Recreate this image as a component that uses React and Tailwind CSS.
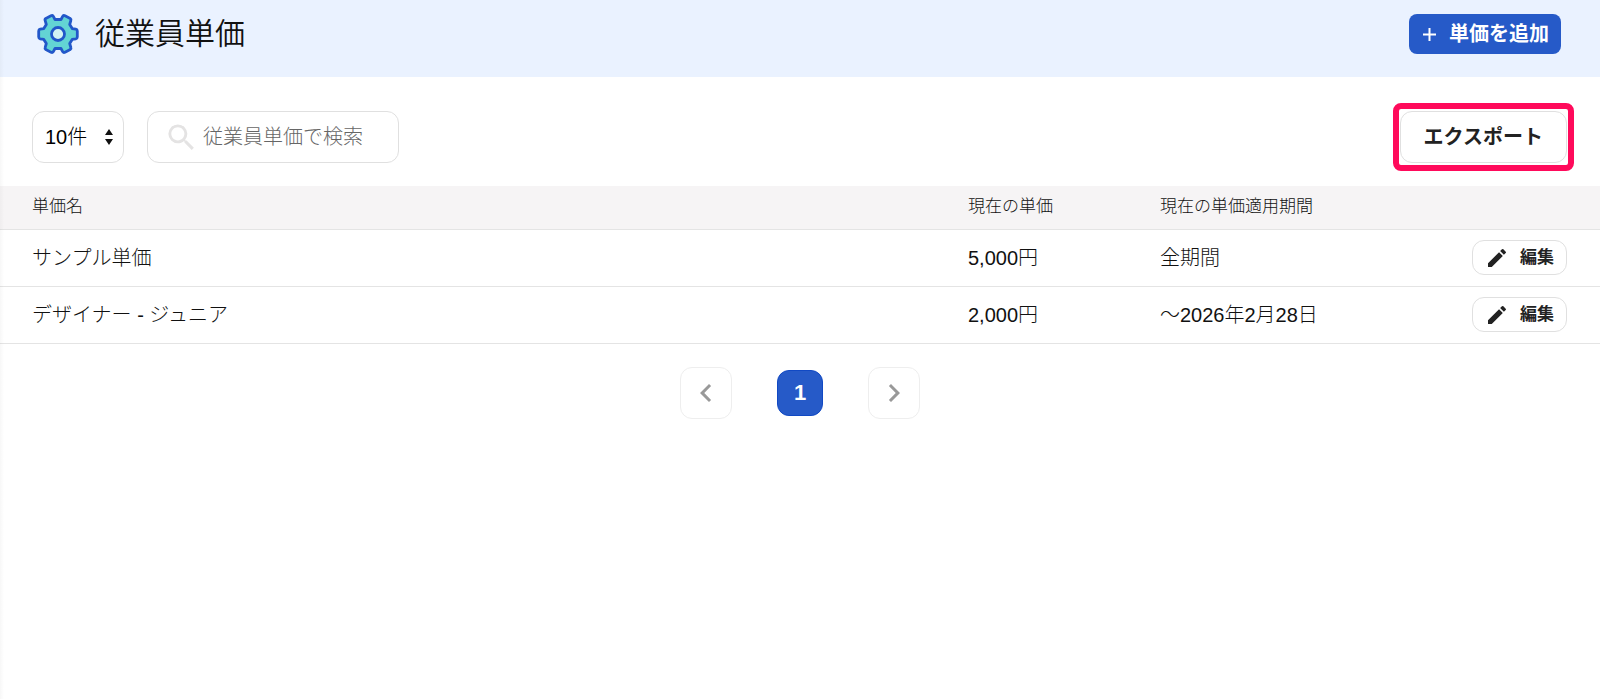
import React, { useState } from "react";
import { MdSearch, MdEdit, MdChevronLeft, MdChevronRight } from "react-icons/md";

const rates = [
  { id: 1, name: "サンプル単価", price: "5,000円", period: "全期間" },
  { id: 2, name: "デザイナー - ジュニア", price: "2,000円", period: "～2026年2月28日" },
];

function GearIcon() {
  return (
    <svg className="w-[42px] h-[42px]" viewBox="0 0 42 42" aria-hidden="true">
      <path
        d="M18 6.500H24L25.800 3.200Q26.600 2 28 2.700L33.200 5.400Q34.400 6.200 33.800 7.600L32.700 11.500L35.200 15.600L38.800 16.200Q40.300 16.500 40.300 18V24Q40.300 25.500 38.800 25.800L35.200 26.400L32.700 30.500L33.800 34.400Q34.400 35.800 33.200 36.600L28 39.300Q26.600 40 25.800 38.800L24 35.500H18L16.200 38.800Q15.400 40 14 39.300L8.800 36.600Q7.600 35.800 8.200 34.400L9.300 30.500L6.800 26.400L3.200 25.800Q1.700 25.500 1.700 24V18Q1.700 16.500 3.200 16.200L6.800 15.600L9.300 11.500L8.200 7.600Q7.600 6.200 8.800 5.400L14 2.700Q15.400 2 16.200 3.200Z"
        fill="#63d4d4"
        stroke="#2257c9"
        strokeWidth="2.8"
        strokeLinejoin="round"
      />
      <circle cx="21" cy="21" r="6.5" fill="#d3f3f3" stroke="#2257c9" strokeWidth="2.8" />
    </svg>
  );
}

function Header() {
  return (
    <header className="flex items-start justify-between h-[77px] bg-[#eaf2ff] pl-[37px] pr-[39px] pt-[13px]">
      <div className="flex items-center gap-4">
        <GearIcon />
        <h1 className="text-[30px] leading-10 font-[350] text-[#111]">従業員単価</h1>
      </div>
      <button
        type="button"
        className="flex items-center gap-3 h-10 mt-px pl-[13px] pr-3 rounded-lg bg-[#265ac8] text-white text-xl leading-6 font-bold"
      >
        <svg className="w-[15px] h-[15px]" viewBox="0 0 15 15" aria-hidden="true">
          <path d="M7.500 1v13M1 7.500h13" stroke="currentColor" strokeWidth="2" />
        </svg>
        単価を追加
      </button>
    </header>
  );
}

function Toolbar() {
  const [keyword, setKeyword] = useState("");

  return (
    <div className="flex items-center justify-between pl-8 pr-[33px] pt-[34px] pb-[23px]">
      <div className="flex items-center gap-[23px]">
        <div className="relative">
          <select
            aria-label="表示件数"
            className="appearance-none block w-[92px] h-[52px] pl-3 border border-[#e0e0e0] rounded-xl bg-white text-xl leading-6 font-light text-black"
          >
            <option>10件</option>
            <option>20件</option>
            <option>50件</option>
          </select>
          <svg
            className="absolute right-[11px] top-[18px] w-2 h-4 pointer-events-none"
            viewBox="0 0 8 16"
            aria-hidden="true"
          >
            <path d="M4 0l4 6H0zM4 16l4-6H0z" fill="#111" />
          </svg>
        </div>

        <label className="flex items-center gap-1 w-[252px] h-[52px] pl-4 pr-3 border border-[#e0e0e0] rounded-xl bg-white">
          <MdSearch className="shrink-0 w-[35px] h-[35px] text-[#e4e3e3]" />
          <input
            type="text"
            aria-label="従業員単価で検索"
            placeholder="従業員単価で検索"
            value={keyword}
            onChange={(e) => setKeyword(e.target.value)}
            className="w-full text-xl leading-6 font-light outline-none placeholder:text-[#666]"
          />
        </label>
      </div>

      <div className="relative">
        <button
          type="button"
          className="block h-[52px] px-[23px] border border-[#e0e0e0] rounded-xl bg-white text-xl leading-6 font-bold text-[#222]"
        >
          エクスポート
        </button>
        <span className="absolute -inset-x-[7px] -inset-y-2 border-6 border-[#ff0a5b] rounded-lg pointer-events-none" />
      </div>
    </div>
  );
}

function RateTable() {
  return (
    <table className="w-full table-fixed border-collapse text-left text-[#111]">
      <colgroup>
        <col />
        <col className="w-[192px]" />
        <col className="w-[260px]" />
        <col className="w-[180px]" />
      </colgroup>
      <thead>
        <tr className="h-[43px] bg-[#f6f4f5] border-b border-[#e4e4e4] text-[17px] leading-6">
          <th className="pl-8 font-light">単価名</th>
          <th className="font-light">現在の単価</th>
          <th className="font-light">現在の単価適用期間</th>
          <th aria-label="操作"></th>
        </tr>
      </thead>
      <tbody>
        {rates.map((rate) => (
          <tr
            key={rate.id}
            className="h-[57px] border-b border-[#e4e4e4] text-xl leading-6 font-light"
          >
            <td className="pl-8">{rate.name}</td>
            <td>{rate.price}</td>
            <td>{rate.period}</td>
            <td className="pr-[33px]">
              <button
                type="button"
                className="flex items-center gap-[11px] h-[35px] ml-auto px-3 border border-[#e0e0e0] rounded-xl bg-white text-[17px] leading-5 font-bold text-[#222]"
              >
                <MdEdit className="w-6 h-6" />
                編集
              </button>
            </td>
          </tr>
        ))}
      </tbody>
    </table>
  );
}

function Pagination() {
  return (
    <nav className="flex items-center justify-center gap-[45px] pt-[23px]">
      <button
        type="button"
        aria-label="前へ"
        className="flex items-center justify-center w-[52px] h-[52px] border border-[#eee] rounded-xl text-[#999]"
      >
        <MdChevronLeft className="w-9 h-9 stroke-current" />
      </button>
      <button
        type="button"
        className="w-[46px] h-[46px] rounded-xl border border-[#1149c4] bg-[#265ac8] text-white text-[22px] leading-6 font-bold"
      >
        1
      </button>
      <button
        type="button"
        aria-label="次へ"
        className="flex items-center justify-center w-[52px] h-[52px] border border-[#eee] rounded-xl text-[#999]"
      >
        <MdChevronRight className="w-9 h-9 stroke-current" />
      </button>
    </nav>
  );
}

function App() {
  return (
    <div className="relative min-h-screen bg-white font-['Liberation_Sans','Noto_Sans_CJK_JP',sans-serif]">
      <Header />
      <main>
        <Toolbar />
        <RateTable />
        <Pagination />
      </main>
      {/* soft shadow from the side menu */}
      <div className="absolute inset-y-0 left-0 w-1 bg-linear-to-r from-black/3 to-transparent pointer-events-none" />
    </div>
  );
}

export default App;
